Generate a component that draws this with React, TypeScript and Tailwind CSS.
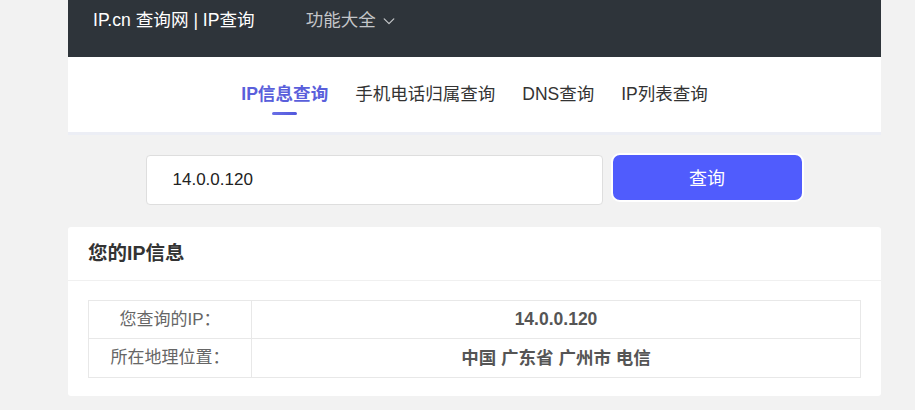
import React, { useState } from 'react';

const tabs = ['IP信息查询', '手机电话归属查询', 'DNS查询', 'IP列表查询'];

const ChevronDown = () => (
  <svg width="14" height="14" viewBox="0 0 16 16" fill="none" className="ml-[6px] mt-[1px]">
    <path d="M2.5 5.5L8 11l5.5-5.5" stroke="currentColor" strokeWidth="1.4" strokeLinecap="round" strokeLinejoin="round" />
  </svg>
);

const App: React.FC = () => {
  const [ip, setIp] = useState('14.0.0.120');
  const active = 0;

  return (
    <div
      className="min-h-screen w-full bg-[#f2f2f2]"
      style={{ fontFamily: '"Liberation Sans", Arial, "Noto Sans CJK SC", sans-serif' }}
    >
      <div className="ml-[68px] w-[813px] pb-4">
        {/* top bar */}
        <div className="h-[57px] bg-[#2e343a] flex items-start pt-[9px] pl-[25px]">
          <span className="text-[17.6px] leading-[22px] text-white">IP.cn 查询网 | IP查询</span>
          <span className="ml-[51px] flex items-center text-[17.5px] leading-[22px] text-[#c4c6c9]">
            功能大全
            <ChevronDown />
          </span>
        </div>

        {/* tabs */}
        <div className="h-[75px] bg-white shadow-[0_3px_0_#eceef5] flex justify-center gap-[27px] pt-[25px]">
          {tabs.map((t, i) => (
            <div key={t} className="flex flex-col items-center">
              <span
                className={
                  i === active
                    ? 'text-[17.6px] leading-[24px] font-bold text-[#5a5fdb]'
                    : 'text-[17.5px] leading-[24px] text-[#333]'
                }
              >
                {t}
              </span>
              {i === active && (
                <span className="mt-[6px] h-[3px] w-[25px] rounded-full bg-gradient-to-r from-[#6a6fe6] to-[#5157dc]" />
              )}
            </div>
          ))}
        </div>

        {/* search */}
        <div className="mt-[21px] flex justify-center items-start">
          <input
            value={ip}
            onChange={(e) => setIp(e.target.value)}
            className="mt-[2px] h-[50px] w-[457px] rounded-[4px] border border-[#dedede] bg-white pl-[26px] text-[17px] text-[#222] outline-none"
            style={{ fontFamily: '"Liberation Sans", Arial, sans-serif' }}
          />
          <button className="ml-[8px] h-[49px] w-[193px] rounded-[9px] border-2 border-white bg-[#505cfd] pt-[3px] text-[18px] text-white">
            查询
          </button>
        </div>

        {/* info card */}
        <div className="mt-[22px] bg-white rounded-[3px] pb-[18px]">
          <div className="h-[54px] border-b border-[#f0f0f0] flex items-center pl-[20px]">
            <h2 className="text-[19.5px] font-bold text-[#333]">您的IP信息</h2>
          </div>
          <div className="px-[20px] pt-[19px]">
            <table className="w-full border-collapse">
              <tbody>
                <tr className="h-[38px]">
                  <td className="w-[163px] border border-[#e8e8e8] text-center text-[17px] text-[#666]">您查询的IP：</td>
                  <td className="border border-[#e8e8e8] text-center text-[17.5px] font-bold text-[#555]">14.0.0.120</td>
                </tr>
                <tr className="h-[39px]">
                  <td className="w-[163px] border border-[#e8e8e8] text-center text-[17px] text-[#666]">所在地理位置：</td>
                  <td className="border border-[#e8e8e8] text-center text-[17.5px] font-bold text-[#555]">中国 广东省 广州市 电信</td>
                </tr>
              </tbody>
            </table>
          </div>
        </div>
      </div>
    </div>
  );
};

export default App;
